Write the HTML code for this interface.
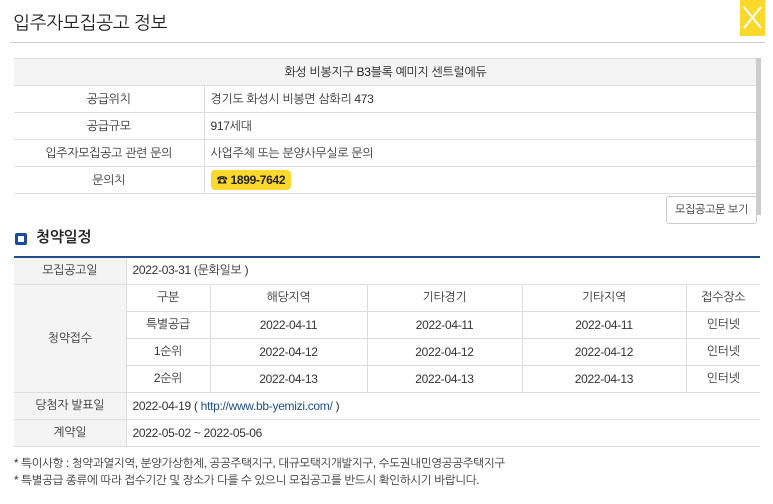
<!DOCTYPE html>
<html><head><meta charset="utf-8"><style>
*{margin:0;padding:0;box-sizing:border-box}
body{width:773px;height:504px;background:#fff;font-family:"Liberation Sans","NanumGothic","Noto Sans CJK KR",sans-serif;color:#333;font-size:12px;position:relative;overflow:hidden;letter-spacing:-0.3px}
.abs{position:absolute}
table{border-collapse:collapse;position:absolute;table-layout:fixed}
td{border-bottom:1px solid #ddd;height:27px;vertical-align:middle}
.t1 td.l{background:#fff;text-align:center;border-right:1px solid #ddd}
.t1 td.r{padding-left:6px}
.t2 td{text-align:center;border-right:1px solid #ddd}
.t2 td.l{background:#f4f4f4;border-right:1px solid #ddd}
.t2 td.lft{text-align:left;padding-left:6px;border-right:none}
</style></head><body>
<div class="abs" style="left:13px;top:12px;font-size:18px;color:#222">입주자모집공고 정보</div>
<div class="abs" style="left:10px;top:42px;width:755px;height:1px;background:#ccc"></div>
<div class="abs" style="left:740px;top:0;width:25px;height:36px;background:#fbd92c">
<svg width="25" height="36"><path d="M4 7 L21 28 M21 7 L4 28" stroke="#fff" stroke-width="2" fill="none"/></svg></div>

<table class="t1" style="left:14px;top:58px;width:743px;border-top:1px solid #ddd">
<col style="width:190px"><col>
<tr><td colspan="2" style="background:#f4f4f4;text-align:center;color:#222">화성 비봉지구 B3블록 예미지 센트럴에듀</td></tr>
<tr><td class="l">공급위치</td><td class="r">경기도 화성시 비봉면 삼화리 473</td></tr>
<tr><td class="l">공급규모</td><td class="r">917세대</td></tr>
<tr><td class="l">입주자모집공고 관련 문의</td><td class="r">사업주체 또는 분양사무실로 문의</td></tr>
<tr><td class="l">문의치</td><td class="r"><span style="background:#fbd92c;border-radius:4px;padding:3px 6px;font-weight:bold;color:#222">☎ 1899-7642</span></td></tr>
</table>
<div class="abs" style="left:756px;top:58px;width:5px;height:157px;background:#ccc"></div>
<div class="abs" style="left:666px;top:196px;width:91px;height:28px;border:1px solid #ccc;border-radius:3px;font-size:11px;text-align:center;line-height:26px;background:#fff">모집공고문 보기</div>

<div class="abs" style="left:15px;top:233px;width:12px;height:12px;background:#1a4c9c;border-radius:2px"><div style="margin:3px;width:6px;height:6px;background:#fff"></div></div>
<div class="abs" style="left:36px;top:229px;font-size:15px;font-weight:bold;color:#222">청약일정</div>

<table class="t2" style="left:14px;top:256px;width:746px;border-top:2px solid #1f4f8a">
<col style="width:112px"><col style="width:84px"><col style="width:157px"><col style="width:155px"><col style="width:164px"><col>
<tr><td class="l">모집공고일</td><td colspan="5" class="lft">2022-03-31 (문화일보 )</td></tr>
<tr><td class="l" rowspan="4">청약접수</td><td>구분</td><td>해당지역</td><td>기타경기</td><td>기타지역</td><td style="border-right:none">접수장소</td></tr>
<tr><td>특별공급</td><td>2022-04-11</td><td>2022-04-11</td><td>2022-04-11</td><td style="border-right:none">인터넷</td></tr>
<tr><td>1순위</td><td>2022-04-12</td><td>2022-04-12</td><td>2022-04-12</td><td style="border-right:none">인터넷</td></tr>
<tr><td>2순위</td><td>2022-04-13</td><td>2022-04-13</td><td>2022-04-13</td><td style="border-right:none">인터넷</td></tr>
<tr><td class="l">당첨자 발표일</td><td colspan="5" class="lft">2022-04-19 ( <span style="color:#1f4f8a">http://www.bb-yemizi.com/</span> )</td></tr>
<tr><td class="l">계약일</td><td colspan="5" class="lft">2022-05-02 ~ 2022-05-06</td></tr>
</table>

<div class="abs" style="left:14px;top:456px;font-size:11.5px">* 특이사항 : 청약과열지역, 분양가상한제, 공공주택지구, 대규모택지개발지구, 수도권내민영공공주택지구</div>
<div class="abs" style="left:14px;top:473px;font-size:11.5px">* 특별공급 종류에 따라 접수기간 및 장소가 다를 수 있으니 모집공고를 반드시 확인하시기 바랍니다.</div>
</body></html>
